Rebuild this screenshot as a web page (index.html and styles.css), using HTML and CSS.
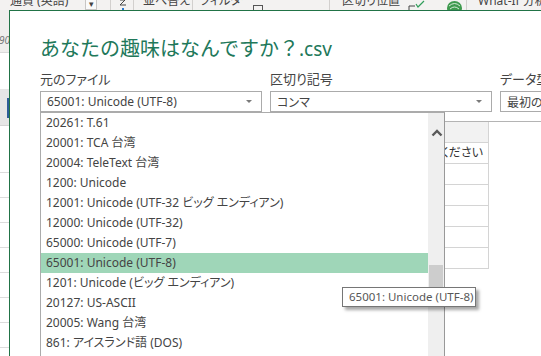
FILE: index.html
```html
<!DOCTYPE html>
<html lang="ja">
<head>
    <meta charset="UTF-8">
    <title>テキスト ファイルのインポート</title>
    <link rel="stylesheet" href="styles.css">
</head>
<body>
    <div class="ribbon">
        <div class="rb-cell rb-currency"><span class="rb-text">通貨 (英語)</span></div>
        <div class="rb-cell rb-drop"><span class="rb-drop-btn">▾</span></div>
        <div class="rb-cell rb-sort">
            <svg width="9" height="10" viewBox="0 0 9 10">
                <polyline points="1,0 6,0 1,5 7,5" fill="none" stroke="#444" stroke-width="1"/>
                <rect x="3" y="8" width="2" height="2" fill="#2b79d0"/>
            </svg>
        </div>
        <div class="rb-cell rb-order"><span class="rb-text">並べ替え</span></div>
        <div class="rb-cell rb-filter">
            <span class="rb-text">フィルター</span>
            <span class="rb-box"></span>
        </div>
        <div class="rb-cell rb-split">
            <span class="rb-text">区切り位置</span>
            <svg class="rb-check" width="17" height="10" viewBox="0 0 17 10">
                <polyline points="7,6 1,6 1,10" fill="none" stroke="#444" stroke-width="1"/>
                <polyline points="8,4 10,7 16,1" fill="none" stroke="#2f9e5a" stroke-width="1.2"/>
            </svg>
            <svg class="rb-flash" width="17" height="10" viewBox="0 0 17 10">
                <ellipse cx="8.5" cy="8" rx="7.5" ry="7" fill="#3f9a4f"/>
                <path d="M3 6 Q8.5 1 14 6 M4 9 Q8.5 5 13 9" fill="none" stroke="#d6ecd8" stroke-width="1"/>
            </svg>
        </div>
        <div class="rb-cell rb-whatif"><span class="rb-text">What-If 分析</span></div>
    </div>

    <div class="workspace">
        <div class="sheet-edge">
            <div class="edge-top"><span class="edge-num">90</span></div>
            <div class="edge-white"></div>
            <div class="edge-head"><span class="edge-mark"></span></div>
            <div class="edge-cells">
                <div class="edge-cell"></div>
                <div class="edge-cell"></div>
                <div class="edge-cell"></div>
                <div class="edge-cell"></div>
                <div class="edge-cell"></div>
                <div class="edge-cell"></div>
                <div class="edge-cell"></div>
                <div class="edge-cell"></div>
                <div class="edge-cell"></div>
            </div>
        </div>

        <div class="dialog">
            <h1 class="dialog-title">あなたの趣味はなんですか？<span class="ext">.csv</span></h1>

            <div class="fields">
                <div class="field">
                    <div class="field-label">元のファイル</div>
                    <div class="select">
                        <span>65001: Unicode (UTF-8)</span>
                        <span class="caret"></span>
                    </div>
                    <div class="dropdown">
                        <ul class="options">
                            <li>20261: T.61</li>
                            <li>20001: TCA 台湾</li>
                            <li>20004: TeleText 台湾</li>
                            <li>1200: Unicode</li>
                            <li>12001: Unicode (UTF-32 ビッグ エンディアン)</li>
                            <li>12000: Unicode (UTF-32)</li>
                            <li>65000: Unicode (UTF-7)</li>
                            <li class="selected">65001: Unicode (UTF-8)</li>
                            <li>1201: Unicode (ビッグ エンディアン)</li>
                            <li>20127: US-ASCII</li>
                            <li>20005: Wang 台湾</li>
                            <li>861: アイスランド語 (DOS)</li>
                            <li>10079: アイスランド語 (Mac)</li>
                            <li>20105: IA5 IRV</li>
                        </ul>
                        <div class="scrollbar">
                            <div class="sb-up">
                                <svg width="12" height="8" viewBox="0 0 12 8">
                                    <polyline points="1.5,6.5 6,2 10.5,6.5" fill="none" stroke="#5a5a5a" stroke-width="2.4"/>
                                </svg>
                            </div>
                            <div class="sb-thumb"></div>
                        </div>
                    </div>
                </div>
                <div class="field">
                    <div class="field-label">区切り記号</div>
                    <div class="select">
                        <span>コンマ</span>
                        <span class="caret"></span>
                    </div>
                </div>
                <div class="field">
                    <div class="field-label">データ型検出</div>
                    <div class="select">
                        <span>最初の 200 行に基づく</span>
                        <span class="caret"></span>
                    </div>
                </div>
            </div>

            <div class="preview">
                <div class="preview-table">
                    <div class="preview-head">Column1</div>
                    <div class="preview-row">回答を入力してください</div>
                    <div class="preview-row"></div>
                    <div class="preview-row"></div>
                    <div class="preview-row"></div>
                    <div class="preview-row"></div>
                    <div class="preview-row"></div>
                </div>
            </div>

            <div class="tooltip">65001: Unicode (UTF-8)</div>
        </div>
    </div>
</body>
</html>
```

FILE: styles.css
```css
html, body {
    margin: 0;
    height: 100%;
    overflow: hidden;
}
body {
    background: #fff;
    color: #444;
    font-family: "Noto Sans", "Noto Sans CJK JP", sans-serif;
    font-feature-settings: "palt";
}

/* ribbon behind the dialog */
.ribbon {
    height: 10px;
    display: flex;
    background: #f3f2f1;
    overflow: hidden;
    font-size: 12px;
}
.rb-cell {
    display: flex;
    align-items: flex-end;
    flex-shrink: 0;
    height: 100%;
    box-sizing: border-box;
    border-right: 1px solid #d2d0ce;
    white-space: nowrap;
}
.rb-text {
    line-height: 12px;
    margin-bottom: 3px;
}
.rb-currency {
    width: 85px;
    padding-left: 10px;
    border-right: none;
}
.rb-drop {
    width: 26px;
    align-items: flex-start;
}
.rb-drop-btn {
    width: 10px;
    height: 9px;
    border: 1px solid #c8c6c4;
    border-top: none;
    font-size: 9px;
    line-height: 8px;
    text-align: center;
    background: #fafafa;
}
.rb-sort {
    width: 23px;
    padding-left: 8px;
    align-items: flex-start;
}
.rb-order {
    width: 59px;
    padding-left: 9px;
}
.rb-filter {
    width: 137px;
    padding-left: 7px;
}
.rb-box {
    width: 14px;
    height: 4px;
    border: 1px solid #555;
    border-bottom: none;
    margin-left: auto;
    margin-right: 66px;
}
.rb-split {
    width: 137px;
    padding-left: 12px;
}
.rb-check {
    margin-left: 8px;
}
.rb-flash {
    margin-left: 21px;
}
.rb-whatif {
    padding-left: 11px;
    border-right: none;
}

.workspace {
    display: flex;
    height: calc(100% - 10px);
}

/* strip of the worksheet left of the dialog */
.sheet-edge {
    width: 9px;
    flex-shrink: 0;
    display: flex;
    flex-direction: column;
    overflow: hidden;
}
.edge-top {
    height: 42px;
    flex-shrink: 0;
    background: #efeeed;
    display: flex;
    align-items: flex-end;
    justify-content: flex-end;
}
.edge-num {
    font-size: 10px;
    font-style: italic;
    line-height: 12px;
    color: #777;
    margin-bottom: 6px;
    margin-right: -1px;
}
.edge-white {
    height: 36px;
    flex-shrink: 0;
    border-top: 1px solid #dadada;
}
.edge-head {
    height: 37px;
    flex-shrink: 0;
    background: #e6e6e6;
    border-bottom: 1px solid #d4d4d4;
    display: flex;
    justify-content: flex-end;
    padding-top: 9px;
    box-sizing: border-box;
}
.edge-mark {
    width: 2px;
    height: 20px;
    background: #2e5e97;
}
.edge-cells {
    padding-top: 22px;
}
.edge-cell {
    height: 24px;
    border-bottom: 1px solid #dcdcdc;
}

/* dialog */
.dialog {
    flex: 1;
    min-width: 0;
    position: relative;
    border-left: 1px solid #217346;
    border-top: 1px solid #217346;
    padding: 24px 0 0 30px;
}
.dialog-title {
    margin: 0;
    font-size: 20px;
    line-height: 28px;
    font-weight: 400;
    color: #21785a;
    white-space: nowrap;
    font-feature-settings: normal;
}
.ext {
    font-size: 19px;
}

.fields {
    display: flex;
    gap: 8px;
    margin-top: 7px;
}
.field {
    position: relative;
    width: 222px;
    flex-shrink: 0;
}
.field-label {
    font-size: 13px;
    line-height: 18px;
    color: #444;
    margin-bottom: 3px;
    white-space: nowrap;
}
.select {
    height: 21px;
    box-sizing: border-box;
    border: 1px solid #ababab;
    padding: 0 9px 0 6px;
    display: flex;
    align-items: center;
    justify-content: space-between;
    font-size: 12px;
    color: #444;
    white-space: nowrap;
    overflow: hidden;
}
.caret {
    width: 0;
    height: 0;
    border-left: 3px solid transparent;
    border-right: 3px solid transparent;
    border-top: 3px solid #7a7a7a;
}

/* open list of the first select */
.dropdown {
    position: absolute;
    top: 100%;
    left: 0;
    z-index: 2;
    width: 405px;
    height: 260px;
    box-sizing: border-box;
    display: flex;
    background: #fff;
    border-left: 1px solid #ababab;
    border-top: 1px solid #ababab;
    border-right: 1px solid #999;
}
.options {
    list-style: none;
    margin: 0;
    padding: 0;
    flex: 1;
}
.options li {
    height: 20px;
    line-height: 20px;
    padding-left: 5px;
    font-size: 12px;
    color: #444;
    white-space: nowrap;
}
.options li.selected {
    background: #9fd6b8;
}
.scrollbar {
    width: 16px;
    background: #efefef;
    display: flex;
    flex-direction: column;
    align-items: center;
}
.sb-up {
    height: 40px;
    padding-left: 2px;
    display: flex;
    align-items: center;
    justify-content: center;
}
.sb-thumb {
    width: 14px;
    height: 35px;
    margin-top: 112px;
    background: #cdcdcd;
}

.preview {
    margin-top: 9px;
    border-top: 1px solid #b4b4b4;
}
.preview-table {
    width: 449px;
    box-sizing: border-box;
    border-right: 1px solid #d4d4d4;
}
.preview-head,
.preview-row {
    height: 21px;
    box-sizing: border-box;
    border-bottom: 1px solid #d4d4d4;
    font-size: 12px;
    line-height: 20px;
    text-align: right;
    padding-right: 5px;
    color: #333;
}
.preview-head {
    background: #f2f2f2;
    color: transparent;
}

.tooltip {
    position: absolute;
    left: 332px;
    top: 276px;
    z-index: 3;
    width: 134px;
    height: 20px;
    box-sizing: border-box;
    border: 1px solid #767676;
    background: #fff;
    padding-left: 6px;
    font-size: 11.5px;
    line-height: 18px;
    color: #575757;
    white-space: nowrap;
    box-shadow: 3px 3px 3px rgba(0, 0, 0, 0.35);
}
```
